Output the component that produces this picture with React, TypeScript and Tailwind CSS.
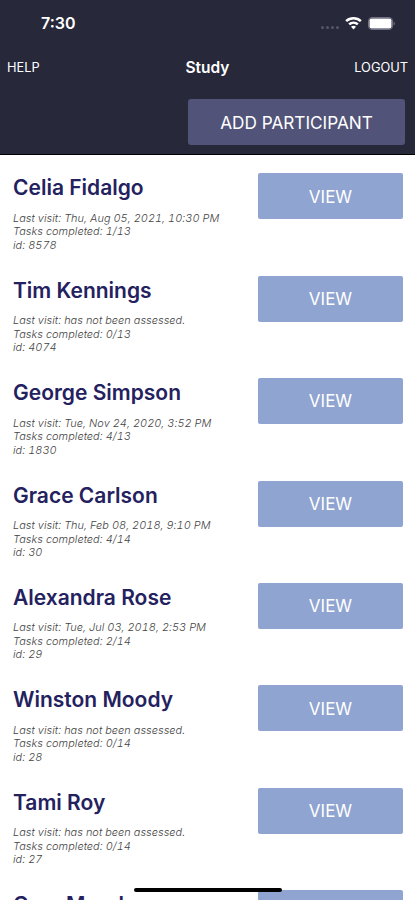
type Participant = {
  id: number;
  name: string;
  lastVisit: string;
  completed: string;
};

const participants: Participant[] = [
  { id: 8578, name: "Celia Fidalgo", lastVisit: "Thu, Aug 05, 2021, 10:30 PM", completed: "1/13" },
  { id: 4074, name: "Tim Kennings", lastVisit: "has not been assessed.", completed: "0/13" },
  { id: 1830, name: "George Simpson", lastVisit: "Tue, Nov 24, 2020, 3:52 PM", completed: "4/13" },
  { id: 30, name: "Grace Carlson", lastVisit: "Thu, Feb 08, 2018, 9:10 PM", completed: "4/14" },
  { id: 29, name: "Alexandra Rose", lastVisit: "Tue, Jul 03, 2018, 2:53 PM", completed: "2/14" },
  { id: 28, name: "Winston Moody", lastVisit: "has not been assessed.", completed: "0/14" },
  { id: 27, name: "Tami Roy", lastVisit: "has not been assessed.", completed: "0/14" },
  { id: 26, name: "Cara Morel", lastVisit: "has not been assessed.", completed: "0/14" },
];

function StatusBar() {
  return (
    <div className="flex h-[46px] items-center justify-between pl-[41px] pr-[19px]">
      <span className="text-[16px] font-semibold leading-none">7:30</span>
      <div className="flex items-center">
        <div className="mr-[6px] mt-[8px] flex gap-[2px]">
          <span className="size-[3px] rounded-full bg-[#555668]" />
          <span className="size-[3px] rounded-full bg-[#555668]" />
          <span className="size-[3px] rounded-full bg-[#555668]" />
          <span className="size-[3px] rounded-full bg-[#555668]" />
        </div>
        <svg width="17" height="13" viewBox="0 0 17 13" fill="white">
          <path d="M8.5 0C5.3 0 2.5 1.2.3 3.2l1.7 1.9a9.6 9.6 0 0 1 13 0l1.7-1.9A12 12 0 0 0 8.5 0Z" />
          <path d="M8.5 4.4c-2 0-3.8.8-5.2 2l1.7 1.9a5.2 5.2 0 0 1 7 0l1.7-1.9a7.7 7.7 0 0 0-5.2-2Z" />
          <path d="M8.5 8.7c-1 0-1.9.4-2.5 1l2.5 2.9 2.5-2.9c-.6-.6-1.5-1-2.5-1Z" />
        </svg>
        <svg className="ml-[6px]" width="28" height="13" viewBox="0 0 28 13">
          <rect x=".5" y=".5" width="24" height="12" rx="3.5" fill="none" stroke="#717286" />
          <rect x="1.5" y="1.5" width="22" height="10" rx="2" fill="white" />
          <path d="M25.7 4.5c1.3.5 1.3 3.5 0 4Z" fill="#85869a" />
        </svg>
      </div>
    </div>
  );
}

function ParticipantRow({ participant }: { participant: Participant }) {
  return (
    <li className="flex h-[102.4px] shrink-0 items-start justify-between pl-[13px] pr-[12px]">
      <div className="pt-[1px]">
        <h2 className="text-[21px] font-semibold leading-[28px] text-[#24215f]">{participant.name}</h2>
        <div className="mt-[9.5px] text-[10.9px] font-light italic leading-[13.5px] tracking-[0.06px] tabular-nums text-[#444444]">
          <p>Last visit: {participant.lastVisit}</p>
          <p>Tasks completed: {participant.completed}</p>
          <p>id: {participant.id}</p>
        </div>
      </div>
      <button className="h-[46px] w-[145px] rounded-[2px] bg-[#8fa4d0] pt-[2px] text-[17px] text-white">VIEW</button>
    </li>
  );
}

export default function App() {
  return (
    <div className="relative flex h-[900px] w-[415px] flex-col overflow-hidden bg-white font-['Inter',sans-serif]">
      <header className="h-[155px] shrink-0 border-b border-black bg-[#27283a] text-white">
        <StatusBar />
        <nav className="grid h-[42px] grid-cols-3 items-center px-[7px] pt-[2px] text-[12.8px]">
          <button className="text-left">HELP</button>
          <h1 className="text-center text-[15.5px] font-semibold">Study</h1>
          <button className="text-right">LOGOUT</button>
        </nav>
        <div className="flex justify-end pr-[10px] pt-[11px]">
          <button className="h-[46px] w-[217px] rounded-[3px] bg-[#515379] pt-[1px] text-[17.2px]">ADD PARTICIPANT</button>
        </div>
      </header>
      <ul className="flex flex-col pt-[18.4px]">
        {participants.map((p) => (
          <ParticipantRow key={p.id} participant={p} />
        ))}
      </ul>
      {/* home indicator */}
      <div className="absolute left-[134px] top-[888px] h-[4px] w-[148px] rounded-full bg-black" />
    </div>
  );
}
